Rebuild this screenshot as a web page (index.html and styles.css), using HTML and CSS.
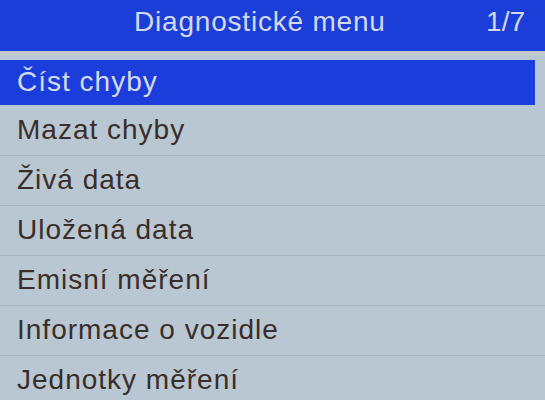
FILE: index.html
```html
<!DOCTYPE html>
<html lang="cs">
<head>
<meta charset="utf-8">
<title>Diagnostické menu</title>
<link rel="stylesheet" href="styles.css">
</head>
<body>
<div class="screen">
  <header class="header">
    <span class="title">Diagnostické menu</span>
    <span class="page">1/7</span>
  </header>
  <ul class="menu">
    <li class="item selected"><span class="label">Číst chyby</span></li>
    <li class="item"><span class="label">Mazat chyby</span></li>
    <li class="item"><span class="label">Živá data</span></li>
    <li class="item"><span class="label">Uložená data</span></li>
    <li class="item"><span class="label">Emisní měření</span></li>
    <li class="item"><span class="label">Informace o vozidle</span></li>
    <li class="item"><span class="label">Jednotky měření</span></li>
  </ul>
</div>
</body>
</html>
```
FILE: styles.css
```css
html, body {
  margin: 0;
  padding: 0;
}
body {
  width: 545px;
  height: 400px;
  overflow: hidden;
  background: #b8c7d2;
  font-family: "Liberation Sans", Arial, sans-serif;
}
.screen {
  display: flex;
  flex-direction: column;
}
.header {
  height: 51px;
  background: #1c3ed8;
  color: #d3d9e6;
  display: flex;
  align-items: center;
  font-size: 28px;
  letter-spacing: 0.8px;
  box-sizing: border-box;
  padding-bottom: 7px;
}
.title {
  margin-left: 134px;
}
.page {
  margin-left: auto;
  margin-right: 20px;
  letter-spacing: 0;
}
.menu {
  list-style: none;
  margin: 0;
  padding: 0;
  border-top: 5px solid #c2c9cc;
}
.item {
  height: 49px;
  border-bottom: 1px solid #a5b4bf;
  display: flex;
  align-items: center;
  color: #3b2d29;
  font-size: 28px;
  letter-spacing: 1px;
}
.label {
  padding-left: 17px;
  padding-bottom: 2px;
}
.item.selected {
  height: 50px;
  padding: 4px 10px 1px 0;
  box-sizing: border-box;
  border-bottom: none;
  align-items: stretch;
}
.item.selected .label {
  flex: 1;
  display: flex;
  align-items: center;
  background: #1b3ddc;
  color: #d5dbe8;
}
```
